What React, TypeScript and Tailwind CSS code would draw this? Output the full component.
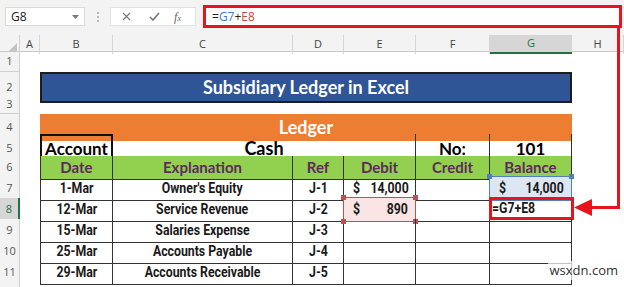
import React from 'react';

const grid = 'grid grid-cols-[20px_20px_73px_180px_51px_72px_74px_82px_52px]';
const ui = { fontFamily: '"Open Sans", "Noto Sans", sans-serif' };
const head = { fontFamily: 'Lato, "Open Sans", sans-serif' };
const body = { fontFamily: 'Roboto, "Liberation Sans", sans-serif' };

const columns = ['A', 'B', 'C', 'D', 'E', 'F', 'G', 'H'];

const entries = [
    { row: 7, date: '1-Mar', text: "Owner's Equity", ref: 'J-1' },
    { row: 8, date: '12-Mar', text: 'Service Revenue', ref: 'J-2' },
    { row: 9, date: '15-Mar', text: 'Salaries Expense', ref: 'J-3' },
    { row: 10, date: '25-Mar', text: 'Accounts Payable', ref: 'J-4' },
    { row: 11, date: '29-Mar', text: 'Accounts Receivable', ref: 'J-5' },
];

// the sheet uses a condensed face; squeeze Roboto to match its width
function Narrow({ children, origin = 'origin-center' }: { children: React.ReactNode; origin?: string }) {
    return <span className={`inline-block scale-x-[0.82] ${origin}`}>{children}</span>;
}

function RowHead({ n, active }: { n: number | string; active?: boolean }) {
    return (
        <div
            style={ui}
            className={
                active
                    ? 'flex items-center justify-center text-[11px] text-[#217346] bg-[#d6d6d6] border-r-2 border-r-[#217346] border-b border-b-[#d0d0d0]'
                    : 'flex items-center justify-center text-[11px] text-[#555] bg-[#f3f3f3] border-r border-b border-[#d0d0d0]'
            }
        >
            {n}
        </div>
    );
}

function Handle({ pos, color }: { pos: string; color: string }) {
    return <span className={`absolute w-[5px] h-[5px] ${pos} ${color}`} />;
}

function Money({ amount }: { amount: string }) {
    return (
        <>
            <Narrow origin="origin-left">$</Narrow>
            <Narrow origin="origin-right">{amount}</Narrow>
        </>
    );
}

export default function App() {
    return (
        <div className="relative w-[624px] h-[287px] overflow-hidden bg-white">
            {/* Formula bar */}
            <div className="h-[35px] bg-[#f3f3f3] flex items-center pb-[2px]" style={ui}>
                <div className="ml-[5px] w-[80px] h-[19px] bg-white border border-[#dadada] flex items-center justify-between pl-[5px] pr-[5px]">
                    <span className="text-[12px] text-[#222]">G8</span>
                    <svg width="7" height="4" viewBox="0 0 7 4">
                        <path d="M0 0h7L3.5 4z" fill="#777" />
                    </svg>
                </div>
                <div className="ml-[12px] flex flex-col gap-[2px]">
                    <span className="w-[2px] h-[2px] bg-[#b8b8b8]" />
                    <span className="w-[2px] h-[2px] bg-[#b8b8b8]" />
                    <span className="w-[2px] h-[2px] bg-[#b8b8b8]" />
                </div>
                <div className="ml-[11px] w-[86px] h-[19px] bg-white border border-[#e2e2e2] flex items-center">
                    <svg className="ml-[11px]" width="9" height="9" viewBox="0 0 9 9">
                        <path d="M1 1l7 7M8 1L1 8" stroke="#777" strokeWidth="1.1" />
                    </svg>
                    <svg className="ml-[18px]" width="11" height="9" viewBox="0 0 11 9">
                        <path d="M1 5l3 3 6-7" stroke="#777" strokeWidth="1.6" fill="none" />
                    </svg>
                    <span className="ml-[14px] text-[12px] italic text-[#666]" style={{ fontFamily: '"Liberation Serif", serif' }}>
                        f<span className="text-[9px]">x</span>
                    </span>
                </div>
                <div className="ml-[7px] w-[419px] h-[23px] bg-white border-[3px] border-[#e8141b] flex items-center pl-[6px]">
                    <span className="text-[12px] text-[#222]">
                        =<span className="text-[#3b7bd0]">G7</span>+<span className="text-[#d0453f]">E8</span>
                    </span>
                </div>
            </div>

            {/* Column headers */}
            <div className={`${grid} h-[17px] bg-[#f3f3f3] border-b border-[#c8c8c8]`} style={ui}>
                <div className="flex items-end justify-end pr-[2px] pb-[2px] border-r border-[#d0d0d0]">
                    <svg width="9" height="9" viewBox="0 0 9 9">
                        <path d="M9 0v9H0z" fill="#c4c4c4" />
                    </svg>
                </div>
                {columns.map((c) => (
                    <div
                        key={c}
                        className={
                            c === 'G'
                                ? 'flex items-center justify-center text-[11px] text-[#217346] bg-[#d6d6d6] border-b-2 border-[#217346]'
                                : 'flex items-center justify-center text-[11px] text-[#444] border-r border-[#d6d6d6]'
                        }
                    >
                        {c}
                    </div>
                ))}
            </div>

            {/* Row 1 */}
            <div className={`${grid} h-[20px]`}>
                <RowHead n={1} />
            </div>

            {/* Row 2 - title */}
            <div className={`${grid} h-[24px]`}>
                <RowHead n={2} />
                <div />
                <div
                    style={head}
                    className="col-span-6 bg-[#2f5597] border-2 border-[#1d1d1d] flex items-center justify-center text-white font-bold text-[18px]"
                >
                    Subsidiary Ledger in Excel
                </div>
            </div>

            {/* Row 3 */}
            <div className={`${grid} h-[18px]`}>
                <RowHead n={3} />
            </div>

            {/* Row 4 - ledger */}
            <div className={`${grid} h-[20px]`}>
                <RowHead n={4} />
                <div />
                <div style={head} className="col-span-6 bg-[#ed7d31] flex items-center justify-center text-white font-bold text-[18px]">
                    Ledger
                </div>
            </div>

            {/* Row 5 - account */}
            <div className={`${grid} h-[22px]`} style={head}>
                <RowHead n={5} />
                <div />
                <div className="border-2 border-[#111] flex items-center justify-center font-bold text-[17px] text-black">Account</div>
                <div className="col-span-3 border-b border-r border-[#333] flex items-center justify-center font-bold text-[18px] text-black">
                    Cash
                </div>
                <div className="border-b border-r border-[#333] flex items-center justify-center font-bold text-[17px] text-black">No:</div>
                <div className="border-b border-r border-[#333] flex items-center justify-center font-bold text-[17px] text-black">101</div>
            </div>

            {/* Row 6 - column titles */}
            <div className={`${grid} h-[21px]`} style={head}>
                <RowHead n={6} />
                <div />
                {['Date', 'Explanation', 'Ref', 'Debit', 'Credit', 'Balance'].map((t, i) => (
                    <div
                        key={t}
                        className={`bg-[#92d050] border-b border-r border-[#333] ${i === 0 ? 'border-l' : ''} flex items-center justify-center font-bold text-[15px] text-[#5e2a5e]`}
                    >
                        {t}
                    </div>
                ))}
            </div>

            {/* Entries */}
            {entries.map((e) => (
                <div key={e.row} className={`${grid} h-[21px]`} style={body}>
                    <RowHead n={e.row} active={e.row === 8} />
                    <div />
                    <div className="border-l border-b border-r border-[#333] flex items-center justify-center font-bold text-[15px] text-[#1a1a1a]">
                        <Narrow>{e.date}</Narrow>
                    </div>
                    <div className="border-b border-r border-[#333] flex items-center justify-center font-bold text-[15px] text-[#1a1a1a]">
                        <Narrow>{e.text}</Narrow>
                    </div>
                    <div className="border-b border-r border-[#333] flex items-center justify-center font-bold text-[15px] text-[#1a1a1a]">
                        <Narrow>{e.ref}</Narrow>
                    </div>
                    <div className="relative border-b border-r border-[#333]">
                        {e.row === 7 && (
                            <div className="h-full flex items-center justify-between pl-[9px] pr-[7px] font-bold text-[15px] text-[#1a1a1a]">
                                <Money amount="14,000" />
                            </div>
                        )}
                        {e.row === 8 && (
                            <div className="absolute inset-[-1px] bg-[#fbe4e4] border border-[#c0504d] flex items-center justify-between pl-[9px] pr-[7px] font-bold text-[15px] text-[#1a1a1a]">
                                <Money amount="890" />
                                <Handle pos="-left-[3px] -top-[3px]" color="bg-[#c0504d]" />
                                <Handle pos="-right-[3px] -top-[3px]" color="bg-[#c0504d]" />
                                <Handle pos="-left-[3px] -bottom-[3px]" color="bg-[#c0504d]" />
                                <Handle pos="-right-[3px] -bottom-[3px]" color="bg-[#c0504d]" />
                            </div>
                        )}
                    </div>
                    <div className="border-b border-r border-[#333]" />
                    <div className="relative border-b border-r border-[#333]">
                        {e.row === 7 && (
                            <div className="absolute inset-[-1px] bg-[#dde7f3] border border-[#4f81bd] flex items-center justify-between pl-[9px] pr-[7px] font-bold text-[15px] text-[#1a1a1a]">
                                <Money amount="14,000" />
                                <Handle pos="-left-[3px] -top-[3px]" color="bg-[#4f81bd]" />
                                <Handle pos="-right-[3px] -top-[3px]" color="bg-[#4f81bd]" />
                            </div>
                        )}
                        {e.row === 8 && (
                            <div className="absolute -left-[1px] -top-[1px] w-[85px] h-[23px] border-[3px] border-[#e8141b] flex items-center font-bold text-[15px] text-[#1a1a1a]">
                                <Narrow origin="origin-left">=G7+E8</Narrow>
                            </div>
                        )}
                    </div>
                </div>
            ))}

            {/* Row 12 (partial) */}
            <div className={`${grid} h-[6px]`}>
                <RowHead n="" />
            </div>

            {/* Red pointer arrow */}
            <svg className="absolute left-0 top-0 pointer-events-none" width="624" height="287" viewBox="0 0 624 287">
                <path d="M618.5 26V207.5H590" stroke="#e8141b" strokeWidth="3" fill="none" />
                <path d="M574 207.5L592 199V216z" fill="#e8141b" />
            </svg>

            {/* Watermark */}
            <div className="absolute right-[4px] bottom-[7px] text-[13px] text-[#333] bg-white/70 px-[2px]" style={ui}>
                wsxdn.com
            </div>
        </div>
    );
}
